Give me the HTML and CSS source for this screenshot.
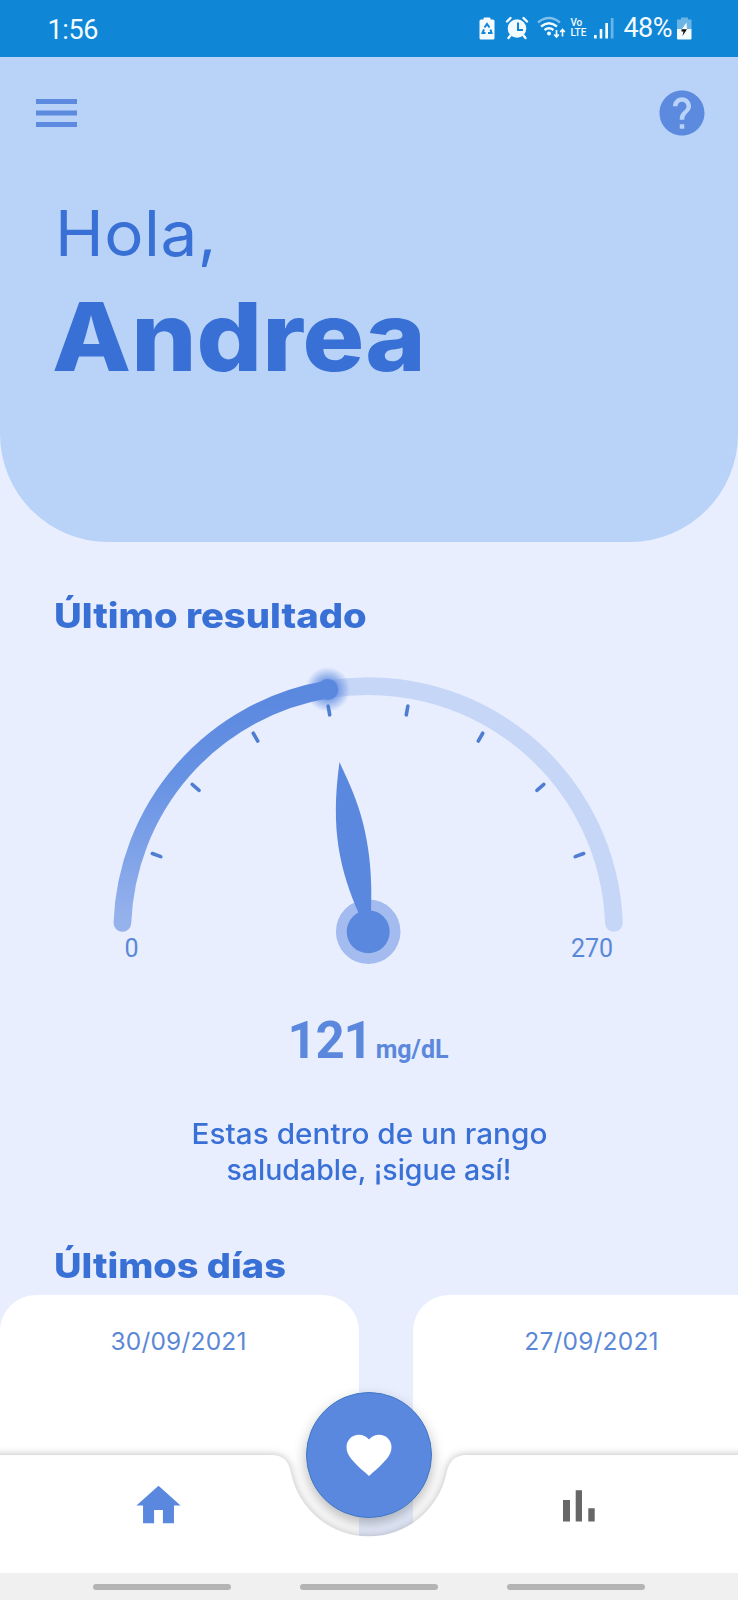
FILE: index.html
```
<!DOCTYPE html>
<html lang="es">
<head>
    <meta charset="UTF-8">
    <title>Inicio</title>
    <link rel="stylesheet" href="styles.css">
</head>
<body>
<div class="app">
    <div class="status-bar">
        <span class="time">1:56</span>
        <div class="status-icons">
            <svg class="ic-saver" width="16" height="23" viewBox="0 0 16 23">
                <path fill="#f4fbff" d="M4.500 2.500V1.500Q4.500 .5 5.500 .5h5q1 0 1 1v1h2.500q1.500 0 1.500 1.500v17q0 1.500-1.500 1.500H2Q.5 22.500 .5 21V4Q.5 2.500 2 2.500z"/>
                <path fill="none" stroke="#0f86d6" stroke-width="2" d="M5.500 10.500L8 7l2.500 3.500M11.500 12.500l1 3.500H9M6.500 16h-3l1.500-3.700"/>
            </svg>
            <svg class="ic-alarm" width="24" height="24" viewBox="0 0 24 24">
                <circle cx="12" cy="12.500" r="9.300" fill="#f4fbff"/>
                <path fill="none" stroke="#f4fbff" stroke-width="2.400" stroke-linecap="round" d="M2 5.500l3.500-3.500M22 5.500L18.500 2M5.500 19.500l-2 2.500M18.500 19.500l2 2.500"/>
                <path fill="none" stroke="#0f86d6" stroke-width="2" d="M13 6.500v7.500h5"/>
            </svg>
            <svg class="ic-wifi" width="29" height="24" viewBox="0 0 29 24">
                <g fill="none" stroke="#f4fbff" stroke-width="2.300">
                    <path opacity=".5" d="M1 6.500Q12 -2.500 23 6.500"/>
                    <path d="M4 10.500q8-6.500 16 0M7.500 14q4.500-3.500 9 0"/>
                    <path stroke-width="1.700" d="M19.500 14v7M17.200 18.500l2.300 2.500 2.300-2.500M25.500 20.500v-7M23.200 16l2.300-2.500 2.300 2.500"/>
                </g>
                <circle cx="12" cy="17.500" r="2" fill="#f4fbff"/>
            </svg>
            <span class="volte"><span>Vo</span><span>LTE</span></span>
            <svg class="ic-signal" width="20" height="21" viewBox="0 0 20 21">
                <path fill="#f4fbff" d="M0 17h2.700v3.500H0zM5.700 11h2.600v9.500H5.700zM11.300 5h2.700v15.500h-2.700z"/>
                <path fill="#f4fbff" opacity=".4" d="M16.800 0h2.700v20.500h-2.700z"/>
            </svg>
            <span class="percent">48%</span>
            <svg class="ic-battery" width="15" height="23" viewBox="0 0 15 23">
                <path fill="#f4fbff" opacity=".4" d="M4 2.500V.5h7v2h3.500V12H0V2.500z"/>
                <path fill="#f4fbff" d="M0 12h14.500v9.500q0 1-1 1H1q-1 0-1-1z"/>
                <path fill="#f4fbff" d="M9.500 5.500L5 12h5z"/>
                <path fill="#111" d="M4.500 12.200h5.500L5.500 19l1-4.500h-2z"/>
            </svg>
        </div>
    </div>

    <header class="header">
        <div class="toolbar">
            <svg class="menu" width="41" height="28" viewBox="0 0 41 28">
                <path fill="#5b8adf" d="M0 0h41v5H0zM0 11.500h41v5H0zM0 23h41v5H0z"/>
            </svg>
            <svg class="help" width="54" height="54" viewBox="0 0 24 24">
                <path fill="#5b8adf" d="M12 2C6.480 2 2 6.480 2 12s4.480 10 10 10 10-4.480 10-10S17.520 2 12 2zm1 17h-2v-2h2v2zm2.070-7.750l-.9.920C13.450 12.900 13 13.500 13 15h-2v-.5c0-1.100.45-2.100 1.170-2.830l1.240-1.260c.37-.36.590-.86.590-1.410 0-1.100-.9-2-2-2s-2 .9-2 2H8c0-2.210 1.790-4 4-4s4 1.790 4 4c0 .88-.36 1.680-.93 2.250z"/>
            </svg>
        </div>
        <p class="greeting">Hola,</p>
        <h1 class="name">Andrea</h1>
    </header>

    <main class="content">
        <h2 class="section-title last-result">Último resultado</h2>

        <!-- origin of the gauge is the needle hub -->
        <svg class="gauge" width="738" height="310" viewBox="-368 -272 738 310">
            <defs>
                <linearGradient id="progress" x1="0" y1="1" x2="0" y2="0">
                    <stop offset="0" stop-color="#96b2ec"/>
                    <stop offset="0.600" stop-color="#6893e4"/>
                    <stop offset="1" stop-color="#5a88df"/>
                </linearGradient>
                <radialGradient id="glow">
                    <stop offset="0.400" stop-color="#5a88df" stop-opacity="0.800"/>
                    <stop offset="1" stop-color="#5a88df" stop-opacity="0"/>
                </radialGradient>
            </defs>
            <path class="track" d="M-40.500 -242.500A245.800 245.800 0 0 1 245.900 -9"/>
            <circle cx="-40.300" cy="-242.500" r="22.500" fill="url(#glow)"/>
            <path class="progress" stroke="url(#progress)" d="M-245.600 -9A245.800 245.800 0 0 1 -40.500 -242.500"/>
            <circle cx="-40.300" cy="-242.500" r="10.500" fill="#5a88df"/>
            <g class="ticks">
                <path d="M-229.500 0h9" transform="rotate(20)"/>
                <path d="M-229.500 0h9" transform="rotate(40)"/>
                <path d="M-229.500 0h9" transform="rotate(60)"/>
                <path d="M-229.500 0h9" transform="rotate(80)"/>
                <path d="M-229.500 0h9" transform="rotate(100)"/>
                <path d="M-229.500 0h9" transform="rotate(120)"/>
                <path d="M-229.500 0h9" transform="rotate(140)"/>
                <path d="M-229.500 0h9" transform="rotate(160)"/>
            </g>
            <circle cx="0.200" cy="-0.300" r="32.300" fill="#a3bbee"/>
            <path fill="#5a88df" d="M-28.500 -170C-16 -142 7 -102 3 -18H-9C-28 -62 -38 -102 -28.500 -170z"/>
            <circle cx="0.200" cy="-0.300" r="21.500" fill="#5a88df"/>
            <text class="scale" x="-236.500" y="24.700">0</text>
            <text class="scale" x="224" y="24.700">270</text>
        </svg>

        <div class="reading">
            <span class="value">121</span>
            <span class="unit">mg/dL</span>
        </div>
        <p class="message">
            <span class="line-1">Estas dentro de un rango</span>
            <span class="line-2">saludable, ¡sigue así!</span>
        </p>

        <h2 class="section-title last-days">Últimos días</h2>
        <div class="days">
            <div class="day">30/09/2021</div>
            <div class="day">27/09/2021</div>
        </div>
    </main>

    <nav class="bottom-nav">
        <svg class="nav-shape" width="738" height="119" viewBox="0 0 738 119">
            <path fill="#fff" d="M-20 0H272Q288 0 291 18A79.400 79.400 0 0 0 446.500 18Q450 0 466 0H758V160H-20z"/>
        </svg>
        <svg class="home" width="53" height="53" viewBox="0 0 24 24">
            <path fill="#5a88df" d="M10 20v-6h4v6h5v-8h3L12 3 2 12h3v8z"/>
        </svg>
        <svg class="stats" width="32" height="32" viewBox="0 0 32 32">
            <path fill="#676767" d="M0 10h7v21.500H0zM12.700 .3h6.300v31.200h-6.300zM25.300 18.200h6.400v13.300h-6.400z"/>
        </svg>
        <button class="fab">
            <svg width="54" height="54" viewBox="0 0 24 24">
                <path fill="#fff" d="M12 21.350l-1.450-1.320C5.400 15.360 2 12.280 2 8.500 2 5.420 4.420 3 7.500 3c1.740 0 3.410.81 4.500 2.090C13.090 3.810 14.760 3 16.500 3 19.580 3 22 5.420 22 8.500c0 3.780-3.400 6.860-8.550 11.540L12 21.350z"/>
            </svg>
        </button>
    </nav>

    <div class="system-bar">
        <span class="pill"></span>
        <span class="pill"></span>
        <span class="pill"></span>
    </div>
</div>
</body>
</html>
```
FILE: styles.css
```
* { box-sizing: border-box; }
body {
    margin: 0;
    background: #e8eefe;
    font-family: Inter, "Noto Sans", sans-serif;
    color: #3970d6;
}
h1, h2, p { margin: 0; }
svg { display: block; flex: none; }

.app {
    position: relative;
    display: flex;
    flex-direction: column;
    width: 738px;
    height: 1600px;
    overflow: hidden;
}

/* status bar */
.status-bar {
    display: flex;
    justify-content: space-between;
    flex: none;
    height: 57px;
    padding: 0 46px 0 47.5px;
    background: #0f86d6;
    color: #f4fbff;
    font-family: Roboto, sans-serif;
}
.time { font-size: 27px; letter-spacing: -0.4px; line-height: 60px; }
.status-icons { display: flex; align-items: center; height: 56px; }
.ic-alarm { margin-left: 10px; }
.ic-wifi { margin-left: 8px; }
.volte {
    display: flex;
    flex-direction: column;
    margin-left: 4px;
    width: 18px;
    font-size: 10px;
    font-weight: 500;
    line-height: 10px;
}
.ic-signal { margin-left: 6px; }
.percent { margin-left: 9px; font-size: 27px; letter-spacing: -0.5px; line-height: 60px; }
.ic-battery { margin-left: 5px; }

/* header */
.header {
    flex: none;
    height: 485px;
    padding: 28px 29px 0 35.5px;
    background: #b9d3f8;
    border-radius: 0 0 108px 108px;
}
.toolbar { display: flex; justify-content: space-between; align-items: center; height: 55px; }
.greeting {
    margin: 55px 0 0 19px;
    font-size: 63px;
    line-height: 76px;
    letter-spacing: 0.5px;
    transform: scaleX(1.04);
    transform-origin: left;
}
.name {
    margin: 16px 0 0 16px;
    font-size: 95px;
    font-weight: 800;
    line-height: 100px;
    transform: scaleX(1.083);
    transform-origin: left;
}

/* content */
.content { display: flex; flex-direction: column; flex: 1; min-height: 0; }
.section-title {
    margin-left: 53.5px;
    font-size: 34.5px;
    font-weight: 800;
    line-height: 40px;
    transform: scaleX(1.1);
    transform-origin: left;
}
.last-result { margin-top: 54px; transform: scaleX(1.107); }
.last-days { margin-top: 58px; }

.gauge { margin-top: 24px; }
.track { fill: none; stroke: #c6d6f7; stroke-width: 17.7; stroke-linecap: round; }
.progress { fill: none; stroke-width: 17.7; stroke-linecap: round; }
.ticks { fill: none; stroke: #4f7dd2; stroke-width: 3.6; stroke-linecap: round; }
.scale { fill: #5a88d8; font: 25px Roboto, sans-serif; text-anchor: middle; }

.reading {
    display: flex;
    align-items: baseline;
    justify-content: center;
    gap: 4px;
    margin-top: 41px;
    height: 60px;
    padding-right: 2px;
    color: #5b88dc;
    font-family: Roboto, sans-serif;
    font-weight: 700;
    line-height: 60px;
}
.value { font-size: 51px; letter-spacing: -1.2px; }
.unit { font-size: 25px; }
.message {
    display: flex;
    flex-direction: column;
    align-items: center;
    margin-top: 45px;
    font-size: 28px;
    font-weight: 500;
    line-height: 36px;
}
.line-1 { transform: scaleX(1.062); }
.line-2 { transform: scaleX(1.018); }

.days { display: flex; flex: none; gap: 54px; margin-top: 9px; }
.day {
    flex: none;
    width: 359px;
    height: 310px;
    padding: 31px 2px 0 0;
    border-radius: 36px;
    background: #fff;
    color: #5b88d6;
    font-size: 24.5px;
    letter-spacing: 0.2px;
    line-height: 30px;
    text-align: center;
}

/* bottom navigation lies over the cards */
.bottom-nav {
    position: absolute;
    left: 0;
    right: 0;
    bottom: 27px;
    display: flex;
    justify-content: space-between;
    height: 118px;
    padding: 24px 143px 0 132px;
}
.nav-shape {
    position: absolute;
    top: 0;
    left: 0;
    overflow: visible;
    filter: drop-shadow(0 0 4px rgba(0, 0, 0, 0.28));
}
.home, .stats { position: relative; }
.stats { margin-top: 11px; }
.fab {
    position: absolute;
    left: 306px;
    top: -63px;
    display: flex;
    align-items: center;
    justify-content: center;
    width: 126px;
    height: 126px;
    padding: 0;
    border: 1px solid #3f79c4;
    border-radius: 50%;
    background: #5a88df;
    box-shadow: 0 6px 14px rgba(0, 0, 0, 0.28);
}

.system-bar {
    position: relative;
    display: flex;
    flex: none;
    gap: 69px;
    height: 27px;
    padding: 11px 0 0 93px;
    background: #f0f0f0;
}
.pill { width: 138px; height: 6px; border-radius: 3px; background: #b4b4b4; }
```
